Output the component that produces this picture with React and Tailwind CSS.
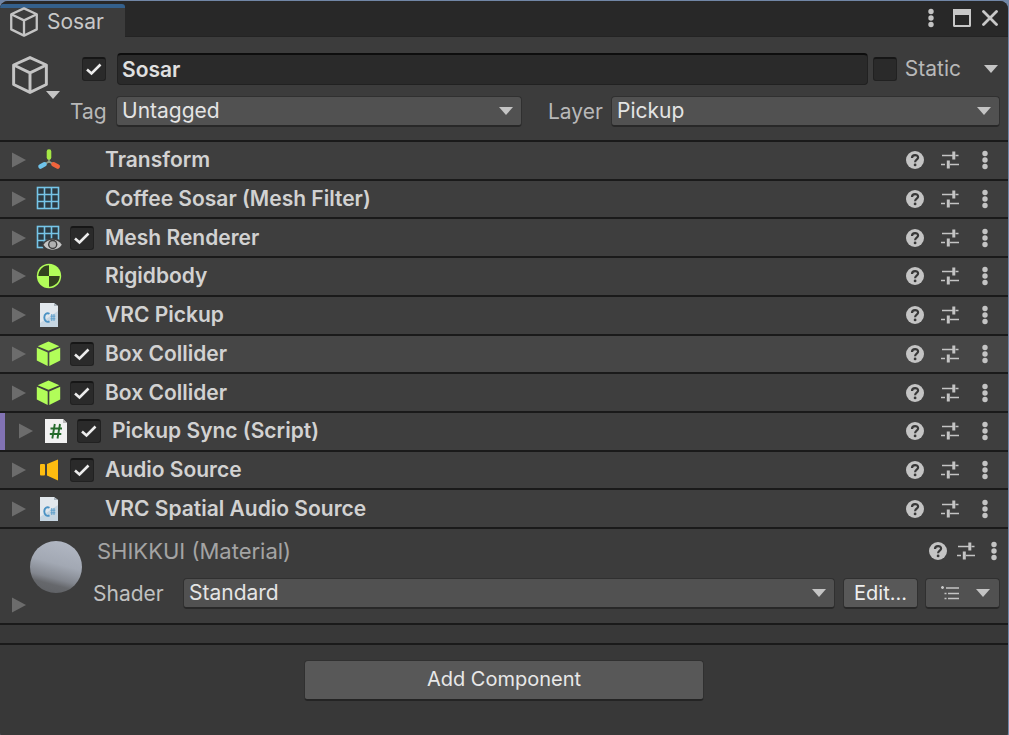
import React from "react";

const components = [
  { title: "Transform", icon: TransformIcon },
  { title: "Coffee Sosar (Mesh Filter)", icon: MeshFilterIcon },
  { title: "Mesh Renderer", icon: MeshRendererIcon, toggle: true },
  { title: "Rigidbody", icon: RigidbodyIcon },
  { title: "VRC Pickup", icon: DllIcon },
  { title: "Box Collider", icon: BoxIcon, toggle: true, hovered: true },
  { title: "Box Collider", icon: BoxIcon, toggle: true },
  { title: "Pickup Sync (Script)", icon: ScriptIcon, toggle: true, marked: true },
  { title: "Audio Source", icon: AudioIcon, toggle: true },
  { title: "VRC Spatial Audio Source", icon: DllIcon },
];

function CubeOutline({ className }) {
  return (
    <svg viewBox="0 0 34 36" fill="none" stroke="#c4c4c4" strokeWidth="2.8" strokeLinejoin="round" className={className}>
      <path d="M17 1.5 32.5 8.5V27L17 34.5 1.5 27V8.5Z" />
      <path d="M1.5 8.5 17 16 32.5 8.5M17 16V34.5" />
    </svg>
  );
}

function TransformIcon() {
  return (
    <svg viewBox="0 0 26 26" className="size-[26px]" strokeWidth="4.6" strokeLinecap="round">
      <path d="M13 14.5 9 17M13 14.5 17 17M13 9V14.5" stroke="#8f9a86" strokeWidth="1.6" />
      <path d="M13 4.5V10.500" stroke="#a5e845" />
      <path d="M8.500 17.300 4.500 19.500" stroke="#6fc3ea" />
      <path d="M17.500 17.300 21.700 19.500" stroke="#f0643c" />
    </svg>
  );
}

function MeshGrid() {
  return (
    <g>
      <rect x="1.5" y="1.5" width="21" height="21" fill="#2c3a42" stroke="#76c5e8" strokeWidth="1.6" />
      <path d="M8.5 1.5V22.5M15.5 1.5V22.5M1.5 8.5H22.5M1.5 15.5H22.5" stroke="#76c5e8" strokeWidth="1.6" />
    </g>
  );
}

function MeshFilterIcon() {
  return (
    <svg viewBox="0 0 26 26" className="size-[26px]">
      <MeshGrid />
    </svg>
  );
}

function MeshRendererIcon() {
  return (
    <svg viewBox="0 0 26 26" className="size-[26px]">
      <MeshGrid />
      <path d="M6 20C9 11.500 22 11.500 26 17V26H10C8 25 7 23 6 20Z" fill="#3e3e3e" />
      <path d="M7.500 19.800C11.500 13 21.500 13 25.800 19.800 21.500 26.300 11.500 26.300 7.500 19.800Z" fill="#c4c4c4" />
      <circle cx="16.700" cy="19.500" r="4.700" fill="#3e3e3e" />
      <circle cx="16.700" cy="19.500" r="3.300" fill="#b0b0b0" />
    </svg>
  );
}

function RigidbodyIcon() {
  return (
    <svg viewBox="0 0 26 26" className="size-[26px]">
      <circle cx="13" cy="13" r="12.200" fill="#b1fd59" />
      <path d="M13 13V2.300A10.700 10.700 0 0 0 2.300 13Z" fill="#33421f" />
      <path d="M13 13V23.700A10.700 10.700 0 0 0 23.700 13Z" fill="#33421f" />
    </svg>
  );
}

function DllIcon() {
  return (
    <svg viewBox="0 0 26 26" className="size-[26px]">
      <path d="M4 1H18L22 4V25H4Z" fill="#e2e8ed" />
      <path d="M18 1V4H22Z" fill="#a9b4bd" />
      <path d="M4 21 22 9V25H4Z" fill="#c6d6e2" />
      <path d="M13.500 11.800C11 10.300 8.300 11.800 8.300 15.500S11 20.700 13.500 19.300" fill="none" stroke="#4a92c4" strokeWidth="1.900" />
      <path d="M15.800 12V19M18 12V19M14.500 14.200H19.300M14.500 16.800H19.300" stroke="#5d9fcb" strokeWidth="1" />
    </svg>
  );
}

function BoxIcon() {
  return (
    <svg viewBox="0 0 26 26" className="size-[26px]" fill="#b1fd59">
      <path d="M12.500 0.500 23.300 5.200 12.500 9.800 1.700 5.200Z" />
      <path d="M0.800 6.800 11.700 11.400V25L0.800 19.600Z" />
      <path d="M24.200 6.800 13.300 11.400V25L24.200 19.600Z" />
    </svg>
  );
}

function ScriptIcon() {
  return (
    <svg viewBox="0 0 26 26" className="size-[26px]">
      <path d="M2 1H20L24 5V25H2Z" fill="#f2f2f2" />
      <path d="M20 1V5H24Z" fill="#b9b9b9" />
      <path d="M11.800 6 9.300 20.500M17 6 14.500 20.500M7.500 10.500H19M6.800 16H18.300" fill="none" stroke="#256b2c" strokeWidth="1.900" />
    </svg>
  );
}

function AudioIcon() {
  return (
    <svg viewBox="0 0 26 26" className="size-[26px]" fill="#fdbc10">
      <rect x="4" y="7" width="5" height="11.500" rx="1" />
      <path d="M11 7 22 2.500V23.500L11 18.500Z" />
    </svg>
  );
}

function HelpIcon() {
  return (
    <svg viewBox="0 0 18 18" className="size-[18px]">
      <circle cx="9" cy="9" r="9" fill="#c4c4c4" />
      <path d="M6 6.900C6 3.200 12.100 3.200 12.100 6.600 12.100 8.800 9.100 8.700 9.100 11.300" fill="none" stroke="#383838" strokeWidth="2.200" />
      <circle cx="9.100" cy="13.900" r="1.400" fill="#383838" />
    </svg>
  );
}

function PresetIcon() {
  return (
    <svg viewBox="0 0 18 18" className="size-[18px]" stroke="#c4c4c4">
      <path d="M1 4.500H12M14.500 4.500H17.500M0 13.500H4M9 13.500H18" strokeWidth="1.500" />
      <path d="M12.800 0.500V8.500M7.300 9.500V17.500" strokeWidth="3" />
    </svg>
  );
}

function DotsIcon() {
  return (
    <svg viewBox="0 0 6 20" className="h-5 w-[6px]" fill="#c4c4c4">
      <circle cx="3" cy="3.500" r="2.700" />
      <circle cx="3" cy="10" r="2.700" />
      <circle cx="3" cy="16.500" r="2.700" />
    </svg>
  );
}

function DownArrow({ className = "" }) {
  return (
    <svg viewBox="0 0 14 8" className={"h-2 w-[14px] " + className}>
      <path d="M0 0H14L7 8Z" fill="#c4c4c4" />
    </svg>
  );
}

function FoldArrow() {
  return (
    <svg viewBox="0 0 14 16" className="h-4 w-[14px]">
      <path d="M0 0.500 14 8 0 15.500Z" fill="#6c6c6c" />
    </svg>
  );
}

function Checkbox({ id, label, checked = false }) {
  return (
    <span className="relative block size-6 shrink-0">
      <input
        id={id}
        type="checkbox"
        aria-label={label}
        defaultChecked={checked}
        className="peer block size-6 appearance-none rounded-[3px] border border-t-2 border-[#212121] border-t-[#161616] bg-[#2a2a2a]"
      />
      <svg viewBox="0 0 24 24" className="pointer-events-none absolute inset-0 size-6 opacity-0 peer-checked:opacity-100">
        <path d="M5 12.500 9.500 16.500 18.500 7.500" fill="none" stroke="#ececec" strokeWidth="2.600" />
      </svg>
    </span>
  );
}

function Dropdown({ id, value, className }) {
  return (
    <div className={"relative " + className}>
      <select
        id={id}
        defaultValue={value}
        className="block h-[31px] w-full appearance-none rounded-[4px] border border-[#303030] border-b-2 border-b-[#282828] bg-[#515151] px-[5px] text-[21px]/7 text-[#e4e4e4]"
      >
        <option>{value}</option>
      </select>
      <DownArrow className="pointer-events-none absolute top-[11px] right-[9px]" />
    </div>
  );
}

function IconButton({ label, children }) {
  return (
    <button type="button" aria-label={label} className="flex items-center">
      {children}
    </button>
  );
}

function ComponentRow({ index, title, icon: Icon, toggle, hovered, marked }) {
  return (
    <section
      className={
        "flex items-center border-b-2 border-[#1a1a1a] pr-5 " + (hovered ? "bg-[#464646]" : "bg-[#3e3e3e]")
      }
    >
      {marked && <span className="mr-[2px] w-[5px] self-stretch bg-[#8273b4]" />}
      <button type="button" aria-label={"Expand " + title} className="ml-3 flex">
        <FoldArrow />
      </button>
      <span className="ml-[10px]">
        <Icon />
      </span>
      <span className="ml-2 w-[35px]">
        {toggle && <Checkbox id={"component-" + index} label={"Enable " + title} checked />}
      </span>
      <h2 className="min-w-0 flex-1 truncate text-[21px]/7 font-semibold text-[#d2d2d2]">{title}</h2>
      <div className="flex items-center">
        <IconButton label="Help"><HelpIcon /></IconButton>
        <span className="ml-[17px] flex"><IconButton label="Presets"><PresetIcon /></IconButton></span>
        <span className="ml-[23px] flex"><IconButton label="More"><DotsIcon /></IconButton></span>
      </div>
    </section>
  );
}

export default function App() {
  return (
    <div className="min-h-screen bg-[#7186a6] pt-px pr-px font-['Inter',sans-serif] [font-optical-sizing:none]">
      <main className="flex min-h-[calc(100vh-1px)] flex-col overflow-hidden rounded-t-lg rounded-b-sm bg-[#383838]">
        <header className="flex h-9 items-stretch justify-between border-b border-[#232323] bg-[#282828] pt-[3px]">
          <div className="-mb-px flex w-[125px] items-center rounded-t-[3px] border-t-4 border-[#34608c] bg-[#3c3c3c] pb-[2px] pl-[10px]">
            <CubeOutline className="h-[30px] w-7" />
            <h1 className="ml-[9px] text-[21px]/7 text-[#c8c8c8]">Sosar</h1>
          </div>
          <div className="flex items-center pr-[10px] pb-1">
            <IconButton label="Window menu"><DotsIcon /></IconButton>
            <button type="button" aria-label="Maximize" className="ml-[19px]">
              <svg viewBox="0 0 18 18" className="size-[18px]">
                <rect x="1" y="1" width="16" height="16" rx="0.500" fill="none" stroke="#c8c8c8" strokeWidth="2" />
                <path d="M0 0H18V6H0Z" fill="#c8c8c8" />
              </svg>
            </button>
            <button type="button" aria-label="Close" className="ml-[11px]">
              <svg viewBox="0 0 16 16" className="size-4">
                <path d="M1.500 1.500 14.500 14.500M14.500 1.500 1.500 14.500" stroke="#c8c8c8" strokeWidth="2.800" strokeLinecap="round" />
              </svg>
            </button>
          </div>
        </header>

        <section className="flex h-[105px] shrink-0 border-b-2 border-[#1a1a1a] bg-[#3c3c3c] pt-4 pr-2">
          <button type="button" aria-label="Object icon" className="flex w-[70px] items-start pt-[3px] pl-3">
            <CubeOutline className="h-[38px] w-9" />
            <DownArrow className="mt-[35px] -ml-[2px]" />
          </button>
          <div className="flex flex-1 flex-col gap-[11px]">
            <div className="flex items-center pl-3">
              <Checkbox id="object-active" label="Active" checked />
              <input
                aria-label="Object name"
                defaultValue="Sosar"
                className="ml-[11px] h-8 min-w-0 flex-1 rounded-[4px] border border-t-2 border-[#212121] border-t-[#0d0d0d] bg-[#2a2a2a] px-1 text-[21px]/7 font-semibold text-[#e0e0e0]"
              />
              <span className="ml-[5px] flex"><Checkbox id="object-static" /></span>
              <label htmlFor="object-static" className="ml-2 text-[21px]/7 text-[#b8b8b8]">Static</label>
              <button type="button" aria-label="Static options" className="ml-[23px] pr-[2px]"><DownArrow /></button>
            </div>
            <div className="flex items-center">
              <label htmlFor="object-tag" className="w-[46px] text-[21px]/7 text-[#b8b8b8]">Tag</label>
              <Dropdown id="object-tag" value="Untagged" className="flex-[406]" />
              <label htmlFor="object-layer" className="ml-[26px] w-[63px] text-[21px]/7 text-[#b8b8b8]">Layer</label>
              <Dropdown id="object-layer" value="Pickup" className="flex-[389]" />
            </div>
          </div>
        </section>

        <div className="grid h-[387px] shrink-0 auto-rows-fr">
          {components.map((c, i) => (
            <ComponentRow key={i} index={i} {...c} />
          ))}
        </div>

        <section className="flex h-24 shrink-0 border-b-2 border-[#1a1a1a] bg-[#3c3c3c] pr-2">
          <div className="w-[93px] pt-3 pl-3">
            <div className="ml-[18px] size-[52px] rounded-full bg-[linear-gradient(195deg,#b4bac6_0%,#a2a8b3_45%,#82868e_68%,#66686c_78%,#5c5e62_100%)]" />
            <button type="button" aria-label="Expand material" className="mt-1 flex">
              <FoldArrow />
            </button>
          </div>
          <div className="flex-1">
            <div className="flex h-[49px] items-center pr-[3px] pb-[5px] pl-1">
              <h2 className="flex-1 text-[22px]/7 text-[#a4a4a4]">SHIKKUI (Material)</h2>
              <IconButton label="Help"><HelpIcon /></IconButton>
              <span className="ml-[10px] flex"><IconButton label="Presets"><PresetIcon /></IconButton></span>
              <span className="ml-4 flex"><IconButton label="More"><DotsIcon /></IconButton></span>
            </div>
            <div className="flex items-center">
              <label htmlFor="shader" className="w-[90px] text-[21px]/7 text-[#c0c0c0]">Shader</label>
              <Dropdown id="shader" value="Standard" className="flex-1" />
              <button type="button" className="ml-2 h-[31px] w-[75px] rounded-[4px] border border-[#303030] border-b-2 border-b-[#282828] bg-[#585858] text-xl/7 text-[#eeeeee]">
                Edit...
              </button>
              <button type="button" aria-label="Shader list" className="ml-[7px] flex h-[31px] w-[75px] items-center justify-between rounded-[4px] border border-[#303030] border-b-2 border-b-[#282828] bg-[#515151] pr-[9px] pl-[15px]">
                <svg viewBox="0 0 18 14" className="h-[14px] w-[18px]" stroke="#c4c4c4" strokeWidth="1.500">
                  <path d="M5 2H18M7 7.500H18M7 12.500H18M0 1.500H3M3.500 7.500H5.500M3.500 12.500H5.500" />
                  <path d="M1.500 0V3" />
                </svg>
                <DownArrow />
              </button>
            </div>
          </div>
        </section>

        <div className="h-5 shrink-0 border-b-2 border-[#1a1a1a] bg-[#383838]" />

        <footer className="flex justify-center pt-[15px] pb-9">
          <button type="button" className="h-[41px] w-[400px] rounded-[4px] border border-[#303030] border-b-2 border-b-[#242424] bg-[#585858] pb-[2px] text-xl/7 text-[#e8e8e8]">
            Add Component
          </button>
        </footer>
      </main>
    </div>
  );
}
